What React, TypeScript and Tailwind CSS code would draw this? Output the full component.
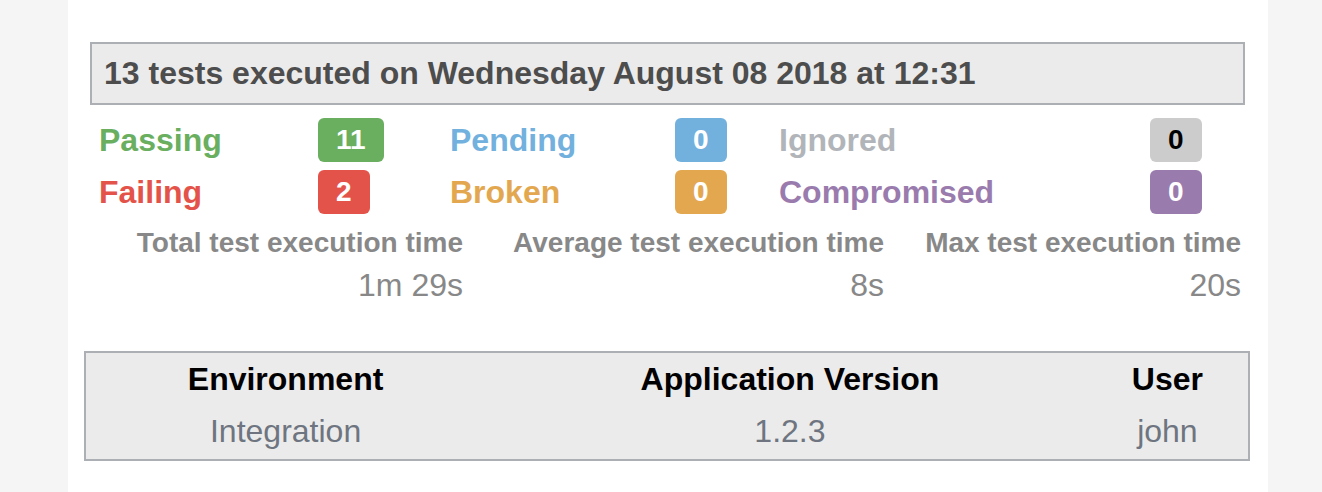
import React from 'react';

const stats = [
  { label: 'Passing', count: 11, text: 'text-[#6aaf5f]', badge: 'bg-[#6aaf5f] text-white' },
  { label: 'Pending', count: 0, text: 'text-[#72b0de]', badge: 'bg-[#72b0de] text-white' },
  { label: 'Ignored', count: 0, text: 'text-[#b1b5ba]', badge: 'bg-[#cccccc] text-black' },
  { label: 'Failing', count: 2, text: 'text-[#e4534a]', badge: 'bg-[#e4534a] text-white' },
  { label: 'Broken', count: 0, text: 'text-[#e3a84f]', badge: 'bg-[#e3a84f] text-white' },
  { label: 'Compromised', count: 0, text: 'text-[#9a7bad]', badge: 'bg-[#9a7bad] text-white' },
];

const times = [
  { label: 'Total test execution time', value: '1m 29s' },
  { label: 'Average test execution time', value: '8s' },
  { label: 'Max test execution time', value: '20s' },
];

const App = () => {
  return (
    <div className="min-h-[492px] bg-[#f5f5f5] font-['Liberation_Sans',Arial,sans-serif]">
      <div className="ml-[68px] w-[1200px] min-h-[492px] bg-white pt-[42px] pl-[22px] pr-[23px]">
        {/* Summary header */}
        <div className="border-2 border-[#acb0b5] bg-[#ebebeb] px-3 text-[32px] leading-[59px] font-bold text-[#4d4d4d]">
          13 tests executed on Wednesday August 08 2018 at 12:31
        </div>

        {/* Result counts */}
        <div className="mt-[13px] grid grid-cols-[221px_130px_227px_102px_373px_auto] gap-y-2 pl-[7px]">
          {stats.map((s) => (
            <React.Fragment key={s.label}>
              <div className={`pl-[2px] text-[32px] leading-[44px] font-bold ${s.text}`}>{s.label}</div>
              <div>
                <span className={`inline-block rounded-md px-[18px] text-[28px] leading-[44px] font-bold ${s.badge}`}>
                  {s.count}
                </span>
              </div>
            </React.Fragment>
          ))}
        </div>

        {/* Timing */}
        <div className="mt-2 grid grid-cols-[373px_421px_357px] text-right leading-[42px] text-[#888888]">
          {times.map((t) => (
            <div key={t.label}>
              <div className="text-[28px] font-bold">{t.label}</div>
              <div className="text-[32px]">{t.value}</div>
            </div>
          ))}
        </div>

        {/* Environment */}
        <div className="mt-[45px] -ml-[6px] -mr-[5px] border-2 border-[#acb0b5] bg-[#ebebeb] pr-[8px]">
          <table className="w-full text-center text-[32px] leading-[42px]">
            <thead>
              <tr>
                <th className="pt-[5px] pb-[5px] font-bold text-black">Environment</th>
                <th className="pt-[5px] pb-[5px] font-bold text-black">Application Version</th>
                <th className="pt-[5px] pb-[5px] font-bold text-black">User</th>
              </tr>
            </thead>
            <tbody>
              <tr className="text-[#6e7580]">
                <td className="pt-[5px] pb-[7px]">Integration</td>
                <td className="pt-[5px] pb-[7px]">1.2.3</td>
                <td className="pt-[5px] pb-[7px]">john</td>
              </tr>
            </tbody>
          </table>
        </div>
      </div>
    </div>
  );
};

export default App;
